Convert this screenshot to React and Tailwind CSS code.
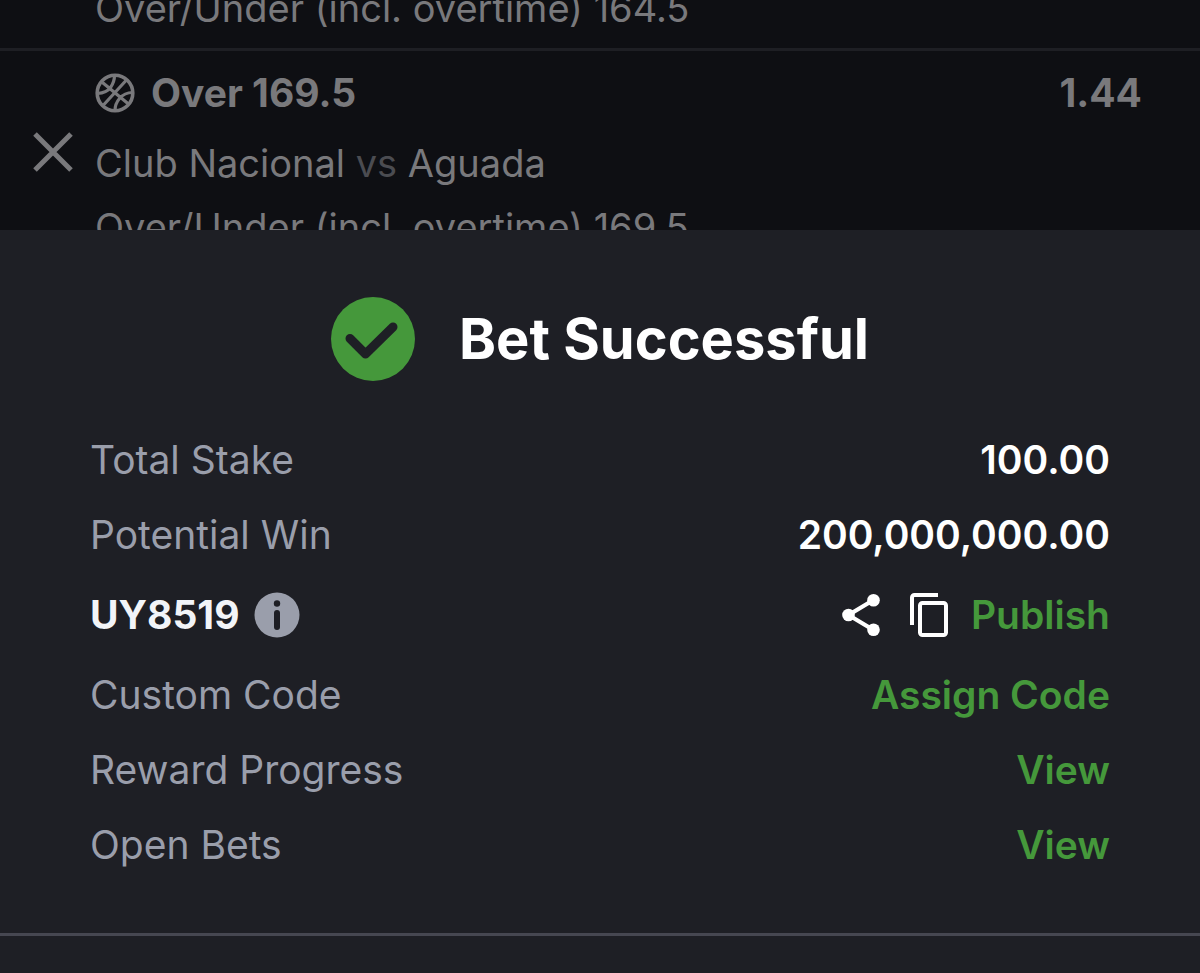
function CloseIcon() {
  return (
    <svg viewBox="0 0 40 40" className="size-10" fill="none" stroke="currentColor" strokeWidth="5" aria-hidden="true">
      <path d="M2 2 38 38M38 2 2 38" />
    </svg>
  );
}

function BasketballIcon() {
  return (
    <svg viewBox="0 0 40 40" className="size-10 shrink-0" fill="none" stroke="currentColor" strokeWidth="3.200" aria-hidden="true">
      <circle cx="20" cy="20" r="17.800" strokeWidth="3.600" />
      <path d="M7.500 9.500 33.500 31M31 7.500 8.500 32M2.500 20.500C9 20 13 18 15.500 14.500S19.500 8 19.500 2.500M20 37.500C20 32 21.500 29 24.500 25.500S31 19.500 37.500 19.500" />
    </svg>
  );
}

function SuccessIcon() {
  return (
    <svg viewBox="0 0 84 84" className="size-[84px] shrink-0" fill="none" aria-hidden="true">
      <circle cx="42" cy="42" r="42" fill="#45983b" />
      <path d="M19 41.500 34.500 57 62 30" stroke="#1e1f25" strokeWidth="9" strokeLinecap="round" strokeLinejoin="round" />
    </svg>
  );
}

function InfoIcon() {
  return (
    <svg viewBox="0 0 46 46" className="size-[46px]" aria-hidden="true">
      <circle cx="23" cy="23" r="22.500" fill="#9a9eab" />
      <circle cx="23" cy="11.500" r="3.200" fill="#1e1f25" />
      <rect x="20" y="18" width="6" height="20" rx="3" fill="#1e1f25" />
    </svg>
  );
}

function ShareIcon() {
  return (
    <svg viewBox="0 0 38 44" className="h-11 w-[38px]" fill="currentColor" aria-hidden="true">
      <path d="M31.500 7 6.500 22 31.500 37" fill="none" stroke="currentColor" strokeWidth="4.200" />
      <circle cx="31.500" cy="7.200" r="6.300" />
      <circle cx="6.500" cy="22" r="6.300" />
      <circle cx="31.500" cy="36.800" r="6.300" />
    </svg>
  );
}

function CopyIcon() {
  return (
    <svg viewBox="0 0 38 44" className="h-11 w-[38px]" fill="none" stroke="currentColor" strokeWidth="4" aria-hidden="true">
      <path d="M2 32V4.500A2.500 2.500 0 0 1 4.500 2H28" />
      <rect x="10" y="10" width="26" height="32" rx="2.500" />
    </svg>
  );
}

function Row({ label, children }) {
  return (
    <div className="flex items-center justify-between">
      <dt className="text-[#9a9eab]">{label}</dt>
      <dd className="font-semibold text-white">{children}</dd>
    </div>
  );
}

export default function App() {
  return (
    <div className="flex min-h-screen flex-col bg-[#1e1f25] font-['Inter',sans-serif] text-[39px]">
      <section className="h-[230px] overflow-hidden bg-[#0e0f13] leading-[60px] text-[#79797c]" aria-label="Selections">
        <div className="-mt-[22px] border-b-3 border-[#1e1f24] pb-[10px] pl-[95px] text-[38px]">
          <p>Over/Under (incl. overtime) 164.5</p>
        </div>
        <div className="flex items-start pt-3">
          <button type="button" aria-label="Remove selection" className="ml-[33px] mt-[69px] w-[62px] shrink-0">
            <CloseIcon />
          </button>
          <div className="flex-1 pr-[58px]">
            <div className="flex items-center gap-4 font-bold">
              <BasketballIcon />
              <span className="flex-1">Over 169.5</span>
              <span>1.44</span>
            </div>
            <div className="flex flex-col gap-1 pt-[10px] text-[38px]">
              <p>
                Club Nacional <span className="text-[#4b4c51]">vs</span> Aguada
              </p>
              <p>Over/Under (incl. overtime) 169.5</p>
            </div>
          </div>
        </div>
      </section>

      <main className="border-b-3 border-[#464751] pb-[51px] pt-[67px]">
        <div className="flex items-center justify-center gap-11">
          <SuccessIcon />
          <h1 className="text-[56px] font-bold leading-[84px] text-white">Bet Successful</h1>
        </div>
        <dl className="mt-[41px] px-[90px] leading-[75px]">
          <Row label="Total Stake">100.00</Row>
          <Row label="Potential Win">200,000,000.00</Row>
          <div className="flex items-center justify-between py-[5px]">
            <dt className="flex items-center gap-[14px] font-bold text-[#f2f4f8]">
              UY8519
              <button type="button" aria-label="Booking code information">
                <InfoIcon />
              </button>
            </dt>
            <dd className="flex items-center font-semibold text-white">
              <button type="button" aria-label="Share" className="mr-[30px]">
                <ShareIcon />
              </button>
              <button type="button" aria-label="Copy code" className="mr-[23px]">
                <CopyIcon />
              </button>
              <button type="button" className="text-[#45983b]">Publish</button>
            </dd>
          </div>
          <Row label="Custom Code">
            <button type="button" className="text-[#45983b]">Assign Code</button>
          </Row>
          <Row label="Reward Progress">
            <a href="#rewards" className="text-[#45983b]">View</a>
          </Row>
          <Row label="Open Bets">
            <a href="#open-bets" className="text-[#45983b]">View</a>
          </Row>
        </dl>
      </main>
    </div>
  );
}
